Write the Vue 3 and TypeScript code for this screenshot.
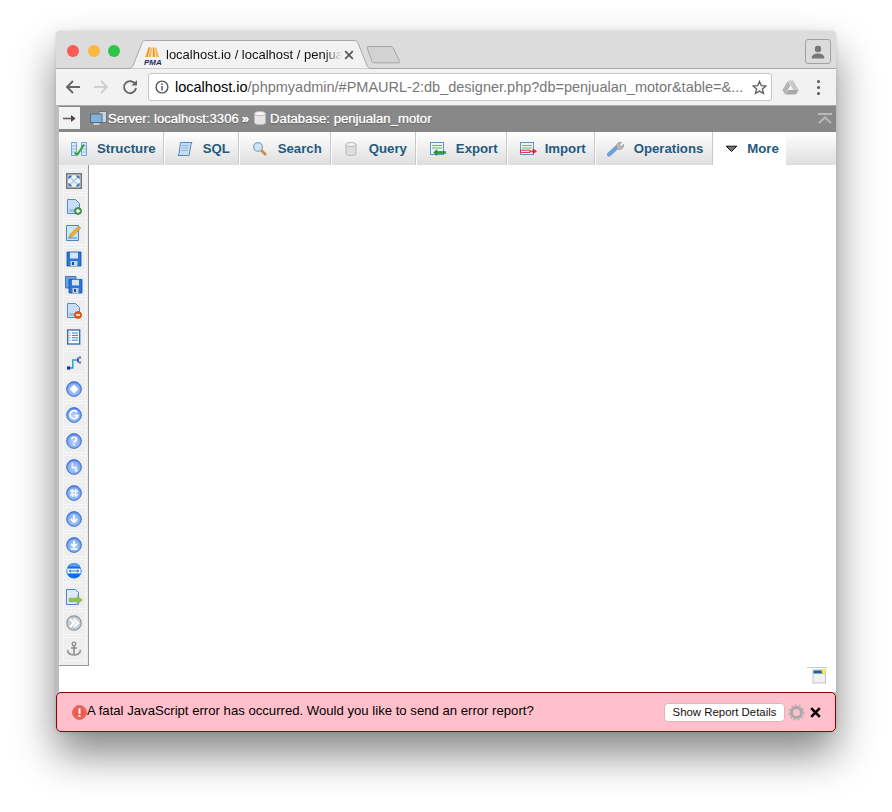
<script setup lang="ts">
interface SphereTool { id: string; glyph: string; fill?: boolean; thin?: boolean }
const spheres: SphereTool[] = [
  { id: 'options', glyph: 'M8 4.8 11.2 8 8 11.2 4.8 8Z', fill: true },
  { id: 'reload', glyph: 'M11.2 5.2A4 4 0 1 0 12 8.6H8.6' },
  { id: 'help', glyph: 'M5.8 6.2C5.8 3.6 10.4 3.6 10.4 6.2 10.4 7.8 8.1 7.8 8.1 9.6M8.1 11V12.4' },
  { id: 'angular', glyph: 'M6.2 3.4V8.6H10.2V11.8M8.8 11.8H11.6', thin: true },
  { id: 'grid', glyph: 'M6.2 4V12M9.8 4V12M4 6.2H12M4 9.8H12', thin: true },
  { id: 'down', glyph: 'M8 3.8V11.4M4.8 8.2 8 11.4 11.2 8.2' },
  { id: 'export', glyph: 'M8 3.4V9.6M5.2 7 8 9.8 10.8 7M4.6 12H11.4' }
]
</script>

<template>
  <div class="page">
    <div class="window">
      <header class="titlebar">
        <div class="lights">
          <span class="light red"></span>
          <span class="light amber"></span>
          <span class="light green"></span>
        </div>
        <div class="tab">
          <svg class="tab-shape" width="243" height="29" viewBox="0 0 243 29">
            <path d="M0.5 28.5H1C3 28.5 4 27.5 5 25.5L14 3C15 1 16 .5 18 .5H226C228 .5 229 1 230 3L239 25.5C240 27.5 241 28.5 243 28.5" fill="#f2f2f2" stroke="#a9a9a9" />
          </svg>
          <svg class="favicon" width="16" height="17" viewBox="0 0 16 17">
            <path d="M1 11 4.6 1.5 6 1.5 3.6 11ZM4.6 11 6.8 1.5H8L7 11ZM8.4 11 8.8 1.5H10.2L11.2 11ZM12.2 11 11 1.5H12.2L15 11Z" fill="#f7b047" />
            <path d="M4.6 1.5 6 1.5 3.6 11H2.6ZM8.8 1.5H10L10.6 11H9.4Z" fill="#ec8f1f" />
          </svg>
          <span class="fav-text">PMA</span>
          <span class="tab-title">localhost.io / localhost / penjua</span>
          <svg class="tab-close" width="10" height="10" viewBox="0 0 10 10">
            <path d="M1.2 1.2 8.8 8.8M8.8 1.2 1.2 8.8" stroke="#5a5a5a" stroke-width="1.8" fill="none" />
          </svg>
        </div>
        <svg class="new-tab" width="35" height="18" viewBox="0 0 35 18">
          <path d="M1 1.5C1 .9 1.4 .5 2 .5H25C26 .5 26.6 1 27 1.6L33.6 15C34 16 33.6 16.8 32.5 16.8H8C7 16.8 6.4 16.3 6 15.5Z" fill="#d2d2d2" stroke="#a6a6a6" />
        </svg>
        <div class="profile">
          <svg width="16" height="14" viewBox="0 0 16 14">
            <circle cx="8" cy="4" r="3.2" fill="#777" />
            <path d="M1.6 13.4C1.6 9.6 5 8.4 8 8.4S14.4 9.6 14.4 13.4Z" fill="#777" />
          </svg>
        </div>
      </header>

      <div class="toolbar">
        <svg class="nav first" width="16" height="16" viewBox="0 0 16 16">
          <path d="M15 8H2M8 2 2 8 8 14" stroke="#666" stroke-width="1.9" fill="none" />
        </svg>
        <svg class="nav" width="16" height="16" viewBox="0 0 16 16">
          <path d="M1 8H14M8 2 14 8 8 14" stroke="#cfcfcf" stroke-width="1.9" fill="none" />
        </svg>
        <svg class="nav reload" width="16" height="16" viewBox="0 0 16 16">
          <path d="M13.4 5.4A6 6 0 1 0 14 9" stroke="#666" stroke-width="1.9" fill="none" />
          <path d="M9.4 6.4H15V1Z" fill="#666" />
        </svg>
        <div class="omnibox">
          <svg class="info" width="14" height="14" viewBox="0 0 14 14">
            <circle cx="7" cy="7" r="5.9" stroke="#555" stroke-width="1.4" fill="none" />
            <path d="M7 6V10.4M7 3.4V5" stroke="#555" stroke-width="1.5" />
          </svg>
          <span class="url"><span class="host">localhost.io</span>/phpmyadmin/#PMAURL-2:db_designer.php?db=penjualan_motor&amp;table=&amp;...</span>
          <svg class="star" width="15" height="15" viewBox="0 0 15 15">
            <path d="M7.5 1.4 9.3 5.6 13.9 6 10.4 9 11.5 13.5 7.5 11.1 3.5 13.5 4.6 9 1.1 6 5.7 5.6Z" stroke="#5f5f5f" stroke-width="1.3" fill="none" />
          </svg>
        </div>
        <svg class="drive" width="17" height="15" viewBox="0 0 17 15">
          <path d="M6 .5H11L16.6 10H11.4Z" fill="#c8c8c8" />
          <path d="M5.8 1 8.3 5.4 3 14.4.4 10Z" fill="#b4b4b4" />
          <path d="M6.2 10H16.6L14 14.6H3.4Z" fill="#a8a8a8" />
        </svg>
        <div class="dots"><i></i><i></i><i></i></div>
      </div>

      <div class="viewport">
        <div class="server-bar">
          <span class="collapse-btn">
            <svg width="13" height="9" viewBox="0 0 13 9">
              <path d="M0 4.5H10" stroke="#6b5a5a" stroke-width="1.6" />
              <path d="M8 1 12.6 4.5 8 8Z" fill="#4a4450" />
            </svg>
          </span>
          <svg class="srv-icon" width="17" height="15" viewBox="0 0 17 15">
            <rect x="9" y=".5" width="7.5" height="11" fill="#cfd4da" stroke="#6d7680" />
            <rect x=".5" y="3" width="11.5" height="8.5" fill="#7fb2df" stroke="#5d6b78" />
            <rect x="3.5" y="12" width="6" height="2" fill="#c8ccd0" />
          </svg>
          <span class="crumb">Server: localhost:3306</span>
          <span class="sep">»</span>
          <svg class="db-icon" width="12" height="14" viewBox="0 0 12 14">
            <path d="M.5 2.6V11.6C.5 13 3 13.6 6 13.6S11.5 13 11.5 11.6V2.6Z" fill="#e6e6e6" stroke="#bbb" />
            <ellipse cx="6" cy="2.6" rx="5.5" ry="2.1" fill="#f7f7f7" stroke="#bbb" />
          </svg>
          <span class="crumb">Database: penjualan_motor</span>
          <svg class="top-icon" width="14" height="11" viewBox="0 0 14 11">
            <path d="M0 1H14" stroke="#b9b9b9" stroke-width="2" />
            <path d="M1 10 7 4.4 13 10" stroke="#b9b9b9" stroke-width="2" fill="none" />
          </svg>
        </div>

        <nav class="tabs">
          <a class="nav-tab">
            <svg width="16" height="16" viewBox="0 0 16 16">
              <path d="M.5 1.5H5.5V14.5H.5ZM10.5 1.5H15.5V14.5H10.5Z" fill="#dcebf8" stroke="#6fa4d4" />
              <path d="M.5 5H5.5M.5 8H5.5M.5 11H5.5M10.5 5H15.5M10.5 8H15.5M10.5 11H15.5" stroke="#8db9e0" />
              <path d="M3.5 12 6.5 13.5 13 3.5" stroke="#2fa23c" stroke-width="2" fill="none" />
            </svg>
            <span>Structure</span>
          </a>
          <a class="nav-tab">
            <svg width="16" height="16" viewBox="0 0 16 16">
              <path d="M3.5 1.5H15L14 3.5 12 14.5H1L2 12.6Z" fill="#c5dcf2" stroke="#4f8cc6" />
              <path d="M5 4.5H11.5M4.6 7H11M4.2 9.5H10.6" stroke="#8fb8de" />
            </svg>
            <span>SQL</span>
          </a>
          <a class="nav-tab">
            <svg width="16" height="16" viewBox="0 0 16 16">
              <path d="M9 9 14 14" stroke="#d08a4c" stroke-width="2.6" />
              <circle cx="6" cy="6" r="4.4" fill="#cfe4f7" stroke="#8ea3b6" stroke-width="1.3" />
            </svg>
            <span>Search</span>
          </a>
          <a class="nav-tab">
            <svg width="16" height="16" viewBox="0 0 16 16">
              <path d="M3 3.5V12.5C3 13.8 5.2 14.5 8 14.5S13 13.8 13 12.5V3.5Z" fill="#dedede" stroke="#b5b5b5" />
              <ellipse cx="8" cy="3.5" rx="5" ry="2" fill="#f4f4f4" stroke="#b5b5b5" />
            </svg>
            <span>Query</span>
          </a>
          <a class="nav-tab">
            <svg width="16" height="16" viewBox="0 0 16 16">
              <rect x=".5" y="1.5" width="13" height="12" fill="#eef5ee" stroke="#5c93c8" />
              <path d="M2 4.5H12M2 7H12" stroke="#6fb06f" />
              <path d="M15.5 10.5H7V8.5L3.6 11.5 7 14.5V12.5H15.5Z" fill="#22a02c" stroke="#157a1d" stroke-width=".5" />
            </svg>
            <span>Export</span>
          </a>
          <a class="nav-tab">
            <svg width="18" height="16" viewBox="0 0 18 16">
              <rect x="1.5" y="1.5" width="13" height="12" fill="#f1f3f6" stroke="#5c93c8" />
              <path d="M3 4.5H13M3 7H13" stroke="#79b07d" />
              <path d="M1.5 9.2H11V11.4H1.5Z" fill="#fff" stroke="#e3203a" />
              <path d="M11 10.3H15M14 8.2 17.4 10.3 14 12.4Z" stroke="#e3203a" fill="#e3203a" />
            </svg>
            <span>Import</span>
          </a>
          <a class="nav-tab">
            <svg width="18" height="16" viewBox="0 0 18 16">
              <path d="M2 13.6 9.6 6.4" stroke="#6d9fd8" stroke-width="4.2" stroke-linecap="round" />
              <path d="M9.4 6.6C8.6 3.4 11.4.6 14.6 1.4L12.4 3.6 14.2 5.6 16.6 3.4C17.2 6.6 14.4 9.2 11.2 8.4Z" fill="#b9b9b9" stroke="#8f8f8f" stroke-width=".7" />
            </svg>
            <span>Operations</span>
          </a>
          <a class="nav-tab active">
            <svg width="13" height="16" viewBox="0 0 13 16">
              <path d="M1.2 5.2H11.8L6.5 10.4Z" fill="#777" stroke="#111" />
            </svg>
            <span>More</span>
          </a>
        </nav>

        <div class="main">
          <aside class="tools">
            <span class="tool">
              <svg width="16" height="16" viewBox="0 0 16 16">
                <rect x=".8" y=".8" width="14.4" height="14.4" fill="#eef2f6" stroke="#6f6f6f" stroke-width="1.5" />
                <path d="M4 4 12 12M12 4 4 12" stroke="#b4cae0" stroke-width="1.6" />
                <path d="M2.4 2.4H6.6L2.4 6.6ZM13.6 2.4V6.6L9.4 2.4ZM2.4 13.6V9.4L6.6 13.6ZM13.6 13.6H9.4L13.6 9.4Z" fill="#3f73ad" />
              </svg>
            </span>
            <span class="tool">
              <svg width="16" height="16" viewBox="0 0 16 16">
                <path d="M1.5 .5H9.5L13.5 4.5V14.5H1.5Z" fill="#c9def5" stroke="#5a8ac0" />
                <path d="M3 10.5H11V12.5H3Z" fill="#7fb8ea" />
                <circle cx="12" cy="12" r="3.6" fill="#4f9a4f" stroke="#2f7a32" stroke-width=".6" />
                <path d="M12 10V14M10 12H14" stroke="#fff" stroke-width="1.3" />
              </svg>
            </span>
            <span class="tool">
              <svg width="16" height="16" viewBox="0 0 16 16">
                <path d="M.5 .5H12.5V15.5H.5Z" fill="#cfe3f7" stroke="#4f86c2" />
                <path d="M2 12H11V14H2Z" fill="#82bcea" />
                <path d="M3 12.6 4 9.6 12 1.8C13 .9 15 2.6 14.2 3.8L6 11.6Z" fill="#f2b035" stroke="#b47a1c" stroke-width=".6" />
              </svg>
            </span>
            <span class="tool">
              <svg width="16" height="16" viewBox="0 0 16 16">
                <path d="M1 1H15V15H1Z" fill="#2a78dc" stroke="#1a4f9c" stroke-width=".8" />
                <rect x="4" y="1.5" width="8" height="6" fill="#d9e4f2" />
                <rect x="4.5" y="10" width="7" height="5" fill="#c6d3e2" />
                <rect x="6" y="11" width="2" height="3" fill="#1f4f90" />
              </svg>
            </span>
            <span class="tool">
              <svg width="18" height="18" viewBox="0 0 18 18">
                <path d="M.5 .5H11V12H.5Z" fill="#6ba3e8" stroke="#2f69b4" stroke-width=".8" />
                <path d="M4 3.4H17V17H4Z" fill="#2a78dc" stroke="#1a4f9c" stroke-width=".8" />
                <rect x="7" y="3.8" width="7" height="5.6" fill="#d9e4f2" />
                <rect x="7.5" y="12" width="6" height="5" fill="#c6d3e2" />
                <rect x="9" y="13" width="2" height="3" fill="#1f4f90" />
              </svg>
            </span>
            <span class="tool">
              <svg width="16" height="16" viewBox="0 0 16 16">
                <path d="M1.5 .5H9.5L13.5 4.5V14.5H1.5Z" fill="#c9def5" stroke="#5a8ac0" />
                <path d="M3 10.5H11V12.5H3Z" fill="#7fb8ea" />
                <circle cx="12" cy="12" r="3.6" fill="#e2571c" stroke="#b83e10" stroke-width=".6" />
                <path d="M10 12H14" stroke="#fff" stroke-width="1.5" />
              </svg>
            </span>
            <span class="tool">
              <svg width="14" height="16" viewBox="0 0 14 16">
                <rect x=".7" y="1" width="12" height="14" fill="#fff" stroke="#2766b8" stroke-width="1.3" />
                <path d="M5 4H11M5 6.4H11M5 8.8H11M5 11.2H11M2.4 4H3.6M2.4 6.4H3.6M2.4 8.8H3.6M2.4 11.2H3.6" stroke="#3e78c4" />
              </svg>
            </span>
            <span class="tool">
              <svg width="14" height="16" viewBox="0 0 14 16">
                <path d="M1.5 13H5.8V5H11" stroke="#1f9fc8" stroke-width="1.4" fill="none" />
                <rect x="0" y="11.4" width="3.2" height="3.2" fill="#1b2fa8" />
                <path d="M11 2.6V7.4M13 1.6V3.4M13 6.6V8.4" stroke="#1b2fa8" stroke-width="1.4" />
              </svg>
            </span>

            <span v-for="tool in spheres" :key="tool.id" class="tool">
              <svg width="16" height="16" viewBox="0 0 16 16">
                <defs>
                  <radialGradient :id="'ball-' + tool.id" cx="50%" cy="55%" r="55%">
                    <stop offset="0" stop-color="#c2d8fa" />
                    <stop offset=".7" stop-color="#86aff0" />
                    <stop offset="1" stop-color="#3f70da" />
                  </radialGradient>
                </defs>
                <circle cx="8" cy="8" r="7.4" :fill="'url(#ball-' + tool.id + ')'" stroke="#3a69cf" stroke-width=".8" />
                <path :d="tool.glyph" stroke="#fff" :stroke-width="tool.thin ? 1.2 : 1.7" :fill="tool.fill ? '#fff' : 'none'" />
              </svg>
            </span>

            <span class="tool">
              <svg width="16" height="16" viewBox="0 0 16 16">
                <circle cx="8" cy="8" r="7.6" fill="#0f6fe8" />
                <path d="M1.4 3.6A7.6 7.6 0 0 1 14.6 3.6Z" fill="#5c9ff2" />
                <rect x="1.4" y="5.6" width="13.2" height="4.8" fill="#fff" />
                <path d="M3.6 8H12.4M5 6.6 3.2 8 5 9.4M11 6.6 12.8 8 11 9.4" stroke="#0f6fe8" stroke-width="1" fill="none" />
              </svg>
            </span>
            <span class="tool">
              <svg width="18" height="17" viewBox="0 0 18 17">
                <path d="M1.5 .5H10.5L13.5 3.5V15.5H1.5Z" fill="#dbe9f8" stroke="#4f86c2" />
                <path d="M4 9H12V6.6L17.6 11 12 15.4V13H4Z" fill="#8cc152" stroke="#a8b890" stroke-width=".6" />
              </svg>
            </span>
            <span class="tool">
              <svg width="16" height="16" viewBox="0 0 16 16">
                <circle cx="8" cy="8" r="7.2" fill="#c4ced6" stroke="#8a98a4" stroke-width="1.2" />
                <path d="M4 4 8 8 4 12M8 4 12 8 8 12" stroke="#fff" stroke-width="2.2" fill="none" />
              </svg>
            </span>
            <span class="tool">
              <svg width="16" height="16" viewBox="0 0 16 16">
                <circle cx="8" cy="3" r="1.8" stroke="#8a8a8a" stroke-width="1.3" fill="none" />
                <path d="M8 5V14M5 7H11" stroke="#8a8a8a" stroke-width="1.6" />
                <path d="M1.4 9C2 12.6 5 14 8 14S14 12.6 14.6 9" stroke="#9a9a9a" stroke-width="1.7" fill="none" />
              </svg>
            </span>
          </aside>
          <div class="canvas">
            <div class="canvas-corner">
              <svg width="15" height="17" viewBox="0 0 15 17">
                <path d="M-5 .5H15" stroke="#c8c8c8" />
                <rect x="1" y="3" width="12.5" height="13" fill="#f0f0f0" stroke="#c4c4c4" />
                <rect x="1.5" y="3.5" width="11" height="3" fill="#1f5f9a" />
                <circle cx="12" cy="4.5" r="2.4" fill="#f4e94c" />
              </svg>
            </div>
          </div>
        </div>
      </div>

      <div class="error-bar">
        <svg class="err-icon" width="15" height="15" viewBox="0 0 15 15">
          <circle cx="7.5" cy="7.5" r="6.8" fill="#ef6a5e" stroke="#d84a42" />
          <circle cx="7.5" cy="7.5" r="5" fill="#f0584f" />
          <path d="M7.5 3.2V8.8M7.5 10V11.8" stroke="#fff" stroke-width="2" />
        </svg>
        <span class="err-text">A fatal JavaScript error has occurred. Would you like to send an error report?</span>
        <button class="err-btn" type="button">Show Report Details</button>
        <svg class="gear" width="17" height="17" viewBox="0 0 17 17">
          <circle cx="8.5" cy="8.5" r="5" fill="none" stroke="#a9a9a9" stroke-width="3" />
          <circle cx="8.5" cy="8.5" r="7" fill="none" stroke="#b5b5b5" stroke-width="2.2" stroke-dasharray="2.2 1.7" />
        </svg>
        <svg class="close" width="11" height="11" viewBox="0 0 11 11">
          <path d="M1.2 1.2 9.8 9.8M9.8 1.2 1.2 9.8" stroke="#000" stroke-width="2.6" fill="none" />
        </svg>
      </div>
    </div>
  </div>
</template>

<style>
html, body { margin: 0; background: #fff; }
</style>

<style scoped>
.page {
  width: 892px;
  height: 812px;
  padding: 31px 0 0 56px;
  box-sizing: border-box;
  overflow: hidden;
  background: #fff;
  font-family: "Liberation Sans", Arial, sans-serif;
}
.window {
  width: 780px;
  height: 701px;
  display: flex;
  flex-direction: column;
  border-radius: 5px 5px 6px 6px;
  background: #bdbdbd;
  box-shadow: 0 22px 42px rgba(0, 0, 0, 0.48), 0 0 4px rgba(0, 0, 0, 0.12);
}
.titlebar {
  height: 38px;
  box-sizing: border-box;
  flex: none;
  display: flex;
  align-items: flex-end;
  background: #dcdcdc;
  border-bottom: 1px solid #a9a9a9;
  border-radius: 5px 5px 0 0;
  position: relative;
}
.lights {
  align-self: flex-start;
  display: flex;
  gap: 8.5px;
  padding: 14px 0 0 11px;
}
.light { width: 12px; height: 12px; border-radius: 50%; }
.red { background: #fb5a55; }
.amber { background: #fdb83e; }
.green { background: #2fc548; }
.tab {
  position: relative;
  width: 243px;
  height: 29px;
  margin: 0 0 -1px 8px;
  display: flex;
  align-items: center;
  flex: none;
}
.tab-shape { position: absolute; left: 0; top: 0; }
.favicon { position: relative; margin: 0 0 0 16px; flex: none; }
.fav-text {
  position: absolute;
  left: 16px;
  top: 18px;
  font-size: 8px;
  line-height: 9px;
  font-weight: 700;
  font-style: italic;
  color: #1a2a6c;
}
.tab-title {
  position: relative;
  width: 176px;
  margin-left: 6px;
  white-space: nowrap;
  font-size: 13px;
  color: #111;
  -webkit-mask-image: linear-gradient(90deg, #000 90%, transparent 100%);
  mask-image: linear-gradient(90deg, #000 90%, transparent 100%);
}
.tab-close { position: relative; margin-left: 2px; flex: none; }
.new-tab { margin: 0 0 4px -5px; flex: none; }
.profile {
  position: absolute;
  right: 5px;
  top: 8px;
  width: 26px;
  height: 25px;
  box-sizing: border-box;
  border: 1px solid #a2a2a2;
  border-radius: 3px;
  display: flex;
  align-items: center;
  justify-content: center;
}
.toolbar {
  height: 37px;
  flex: none;
  box-sizing: border-box;
  display: flex;
  align-items: center;
  background: #f2f2f2;
  border-bottom: 1px solid #ababab;
}
.nav { margin-left: 12px; flex: none; }
.nav.first { margin-left: 9px; }
.nav.reload { margin-left: 13px; }
.omnibox {
  width: 624px;
  height: 28px;
  margin-left: 10px;
  box-sizing: border-box;
  flex: none;
  display: flex;
  align-items: center;
  background: #fff;
  border: 1px solid #c6c6c6;
  border-radius: 3px;
  padding-left: 6px;
}
.info { flex: none; }
.url {
  margin-left: 6px;
  width: 568px;
  flex: none;
  white-space: nowrap;
  font-size: 14.5px;
  color: #777;
}
.host { color: #000; }
.star { margin-left: 9px; flex: none; }
.drive { margin-left: 10px; flex: none; }
.dots {
  margin-left: 18px;
  display: flex;
  flex-direction: column;
  gap: 3px;
}
.dots i { width: 3px; height: 3px; border-radius: 50%; background: #555; display: block; }
.viewport {
  flex: 1;
  min-height: 0;
  margin-left: 3px;
  display: flex;
  flex-direction: column;
  background: #fff;
}
.server-bar {
  height: 26px;
  flex: none;
  box-sizing: border-box;
  display: flex;
  align-items: center;
  padding-bottom: 2px;
  background: #888;
  color: #fff;
  font-size: 13.15px;
  text-shadow: 0 0 1px rgba(255, 255, 255, 0.8), 0 1px 1px #555;
}
.collapse-btn {
  width: 21px;
  height: 22px;
  flex: none;
  display: flex;
  align-items: center;
  justify-content: center;
  background: #f2f2f2;
}
.srv-icon { margin-left: 10px; flex: none; }
.crumb { margin-left: 1px; white-space: nowrap; }
.sep { margin: 0 5px 0 3px; font-weight: 700; }
.db-icon { margin-right: 3px; flex: none; }
.top-icon { margin-left: auto; margin-right: 4px; flex: none; }
.tabs {
  height: 33px;
  flex: none;
  display: flex;
  background: linear-gradient(#fff, #dedede);
}
.nav-tab {
  display: flex;
  align-items: center;
  gap: 10px;
  padding: 0 8px 0 12px;
  font-size: 13.2px;
  font-weight: 700;
  color: #235a81;
  border-right: 1px solid #c8c8c8;
  box-shadow: inset 1px 0 0 #fff;
  white-space: nowrap;
}
.nav-tab:first-child { box-shadow: none; padding-right: 7px; }
.nav-tab:nth-child(2) { padding-left: 13px; }
.nav-tab:nth-child(3) { padding-left: 13px; }
.nav-tab:nth-child(5) { padding-left: 14px; }
.nav-tab:nth-child(6) { gap: 8px; }
.nav-tab:nth-child(7) { gap: 9px; padding-right: 9px; }
.nav-tab.active { gap: 9px; padding-right: 7px; background: #fff; border-right: 0; box-shadow: none; }
.main { flex: 1; min-height: 0; display: flex; }
.tools {
  width: 30px;
  height: 501px;
  flex: none;
  box-sizing: border-box;
  display: flex;
  flex-direction: column;
  align-items: center;
  gap: 2px;
  padding: 4px 0 0 1px;
  background: #eee;
  border-right: 1px solid #999;
  border-bottom: 1px solid #999;
}
.tool {
  width: 23px;
  height: 24px;
  flex: none;
  box-sizing: border-box;
  display: flex;
  align-items: center;
  justify-content: center;
  border: 1px dotted #fff;
}
.canvas {
  flex: 1;
  display: flex;
  justify-content: flex-end;
  align-items: flex-end;
}
.canvas-corner { padding: 0 9px 8px 0; display: flex; }
.canvas-corner svg { overflow: visible; }
.error-bar {
  height: 40px;
  flex: none;
  box-sizing: border-box;
  display: flex;
  align-items: center;
  background: #ffc0cb;
  border: 1px solid #8b0000;
  border-radius: 5px;
  padding: 0 14px 0 15px;
}
.err-icon { flex: none; margin-top: 1px; }
.err-text {
  font-size: 13.15px;
  color: #000;
  white-space: nowrap;
  margin-top: -3px;
}
.err-btn {
  margin-left: auto;
  width: 121px;
  height: 19px;
  padding: 0;
  background: #fff;
  border: 1px solid #d8b8bf;
  border-radius: 4px;
  font-family: inherit;
  font-size: 11.4px;
  color: #111;
  white-space: nowrap;
  flex: none;
}
.gear { margin-left: 3px; flex: none; }
.close { margin-left: 5px; flex: none; }
</style>
